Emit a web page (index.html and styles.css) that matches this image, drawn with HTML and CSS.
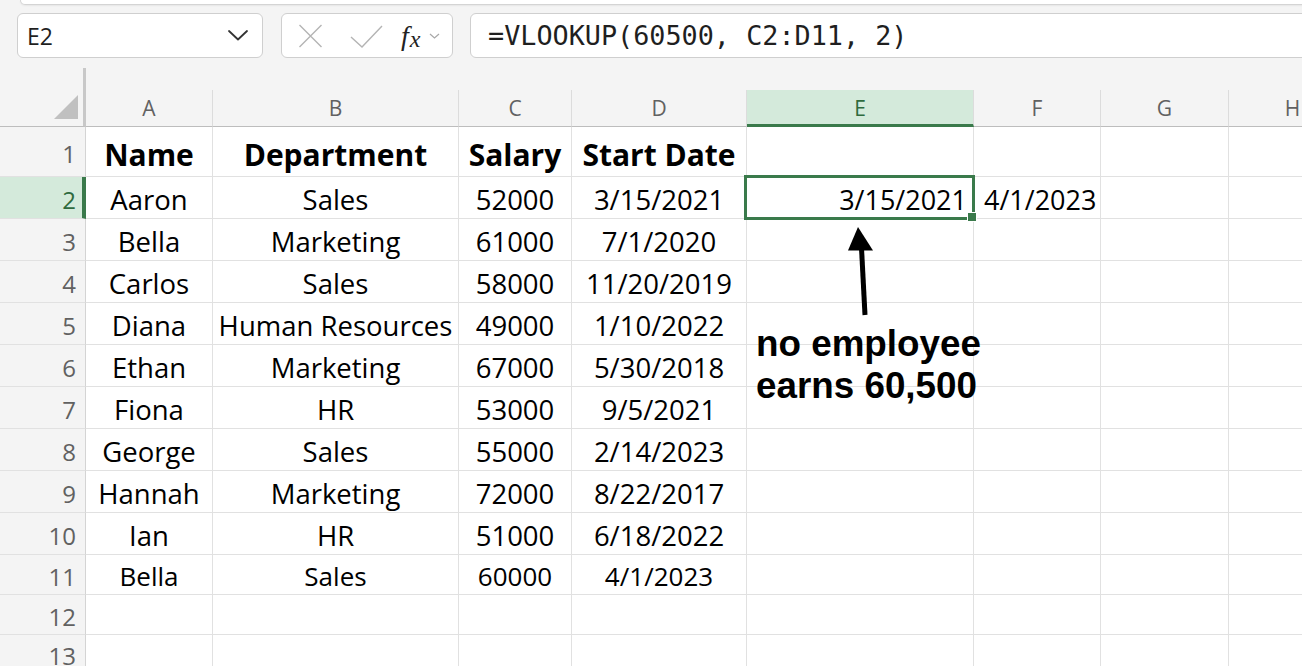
FILE: index.html
```html
<!DOCTYPE html>
<html>
<head>
<meta charset="utf-8">
<link rel="stylesheet" href="styles.css">
</head>
<body>
<div class="app">
  <div class="topstrip"></div>
  <div class="fbar">
    <div class="namebox">
      <span>E2</span>
      <svg width="20" height="11" viewBox="0 0 20 11"><path d="M1 1 L10 9.5 L19 1" fill="none" stroke="#333" stroke-width="1.8" stroke-linecap="round" stroke-linejoin="round"/></svg>
    </div>
    <div class="btns">
      <svg class="ic-x" width="25" height="24" viewBox="0 0 25 24"><path d="M1.5 1 L23.5 23 M23.5 1 L1.5 23" stroke="#b4b4b4" stroke-width="1.4" fill="none"/></svg>
      <svg class="ic-ok" width="33" height="23" viewBox="0 0 33 23"><path d="M1 12 L12 22 L32 1" stroke="#b4b4b4" stroke-width="1.4" fill="none"/></svg>
      <span class="fx"><i>f</i><i class="fxx">x</i></span>
      <svg class="ic-dd" width="11" height="6" viewBox="0 0 11 6"><path d="M1 1 L5.5 5 L10 1" stroke="#a8a8a8" stroke-width="1.2" fill="none"/></svg>
    </div>
    <div class="formula">=VLOOKUP(60500, C2:D11, 2)</div>
  </div>

  <div class="sheet">
    <div class="corner"><div class="tri"></div></div>
    <div class="spacer"></div>

    <div class="ch">A</div><div class="ch">B</div><div class="ch">C</div><div class="ch">D</div><div class="ch sel">E</div><div class="ch">F</div><div class="ch">G</div><div class="ch">H</div>

    <div class="rh">1</div><div class="c h">Name</div><div class="c h">Department</div><div class="c h">Salary</div><div class="c h">Start Date</div><div class="c"></div><div class="c"></div><div class="c"></div><div class="c"></div>

    <div class="rh sel">2</div><div class="c">Aaron</div><div class="c">Sales</div><div class="c">52000</div><div class="c">3/15/2021</div><div class="c r active">3/15/2021</div><div class="c l">4/1/2023</div><div class="c"></div><div class="c"></div>

    <div class="rh">3</div><div class="c">Bella</div><div class="c">Marketing</div><div class="c">61000</div><div class="c">7/1/2020</div><div class="c"></div><div class="c"></div><div class="c"></div><div class="c"></div>

    <div class="rh">4</div><div class="c">Carlos</div><div class="c">Sales</div><div class="c">58000</div><div class="c">11/20/2019</div><div class="c"></div><div class="c"></div><div class="c"></div><div class="c"></div>

    <div class="rh">5</div><div class="c">Diana</div><div class="c">Human Resources</div><div class="c">49000</div><div class="c">1/10/2022</div><div class="c"></div><div class="c"></div><div class="c"></div><div class="c"></div>

    <div class="rh">6</div><div class="c">Ethan</div><div class="c">Marketing</div><div class="c">67000</div><div class="c">5/30/2018</div><div class="c"></div><div class="c"></div><div class="c"></div><div class="c"></div>

    <div class="rh">7</div><div class="c">Fiona</div><div class="c">HR</div><div class="c">53000</div><div class="c">9/5/2021</div><div class="c"></div><div class="c"></div><div class="c"></div><div class="c"></div>

    <div class="rh">8</div><div class="c">George</div><div class="c">Sales</div><div class="c">55000</div><div class="c">2/14/2023</div><div class="c"></div><div class="c"></div><div class="c"></div><div class="c"></div>

    <div class="rh">9</div><div class="c">Hannah</div><div class="c">Marketing</div><div class="c">72000</div><div class="c">8/22/2017</div><div class="c"></div><div class="c"></div><div class="c"></div><div class="c"></div>

    <div class="rh">10</div><div class="c">Ian</div><div class="c">HR</div><div class="c">51000</div><div class="c">6/18/2022</div><div class="c"></div><div class="c"></div><div class="c"></div><div class="c"></div>

    <div class="rh">11</div><div class="c s11">Bella</div><div class="c s11">Sales</div><div class="c s11">60000</div><div class="c s11">4/1/2023</div><div class="c"></div><div class="c"></div><div class="c"></div><div class="c"></div>

    <div class="rh">12</div><div class="c"></div><div class="c"></div><div class="c"></div><div class="c"></div><div class="c"></div><div class="c"></div><div class="c"></div><div class="c"></div>

    <div class="rh last">13</div><div class="c"></div><div class="c"></div><div class="c"></div><div class="c"></div><div class="c"></div><div class="c"></div><div class="c"></div><div class="c"></div>
  </div>

  <svg class="arrow" width="40" height="100" viewBox="0 0 40 100">
    <path d="M18 7 L8 30.5 L33 30.5 Z" fill="#000"/>
    <path d="M21.5 28 L25 95" stroke="#000" stroke-width="5" fill="none"/>
  </svg>
  <div class="note">no employee<br>earns 60,500</div>
</div>
</body>
</html>
```
FILE: styles.css
```css
* { box-sizing: border-box; }

body {
  margin: 0;
  background: #f4f4f4;
  overflow: hidden;
  font-family: "Open Sans", "Noto Sans", sans-serif;
}

.app {
  position: relative;
  width: 1302px;
  height: 666px;
  overflow: hidden;
}

.topstrip {
  margin-left: 20px;
  margin-right: -10px;
  height: 5px;
  background: #fff;
  border: 1px solid #d4d4d4;
  border-top: 0;
  border-bottom-left-radius: 8px;
  box-shadow: 0 1px 2px rgba(0, 0, 0, 0.06);
}

.fbar {
  display: flex;
  margin-top: 8px;
  height: 45px;
  padding-left: 17px;
}

.namebox {
  width: 246px;
  background: #fff;
  border: 1px solid #cfcfcf;
  border-radius: 6px;
  display: flex;
  align-items: center;
  justify-content: space-between;
  padding: 0 14px 0 9px;
  font-size: 23px;
  color: #1f1f1f;
}

.btns {
  width: 172px;
  margin-left: 18px;
  background: #fff;
  border: 1px solid #cfcfcf;
  border-radius: 6px;
  display: flex;
  align-items: center;
  padding-left: 16px;
}

.ic-x { margin-top: 1px; }
.ic-ok { margin-left: 27px; margin-top: 1px; }

.fx {
  margin-left: 18px;
  font-family: "Liberation Serif", serif;
  color: #222;
  display: flex;
  align-items: baseline;
}
.fx i { font-style: italic; }
.fx i:first-child { font-size: 28px; }
.fxx { font-size: 24px; margin-left: 1px; position: relative; top: 2px; }

.ic-dd { margin-left: 9px; }

.formula {
  flex: 1;
  margin-left: 17px;
  margin-right: -12px;
  background: #fff;
  border: 1px solid #cfcfcf;
  border-radius: 6px;
  padding-left: 17px;
  display: flex;
  align-items: center;
  font-family: "DejaVu Sans Mono", monospace;
  font-size: 26.8px;
  color: #1f1f1f;
  white-space: nowrap;
}

.sheet {
  margin-top: 10px;
  display: grid;
  grid-template-columns: 86px 127px 246px 113px 175px 227px 127px 128px 128px;
  grid-template-rows: 22px 37px 50px repeat(9, 42px) 40px 40px 40px;
}

.corner {
  grid-row: span 2;
  border-right: 3px solid #c8c8c8;
  border-bottom: 1px solid #bdbdbd;
  display: flex;
  align-items: flex-end;
  justify-content: flex-end;
  padding: 0 5px 7px 0;
}

.tri {
  width: 24px;
  height: 24px;
  background: #c0c0c0;
  clip-path: polygon(100% 0, 100% 100%, 0 100%);
}

.spacer {
  grid-column: 2 / -1;
}

.ch {
  border-right: 1px solid #dcdcdc;
  border-bottom: 1px solid #bdbdbd;
  display: flex;
  align-items: center;
  justify-content: center;
  font-size: 21px;
  color: #616161;
}

.ch.sel {
  background: #d4eadb;
  border-bottom: 3px solid #3a7a4b;
  color: #2f6a3e;
  padding-top: 2px;
}

.rh {
  border-right: 1px solid #d4d4d4;
  border-bottom: 1px solid #e1e1e1;
  display: flex;
  align-items: center;
  justify-content: flex-end;
  padding: 3px 9px 0 0;
  font-size: 24px;
  color: #616161;
}

.rh.sel {
  background: #d4eadb;
  border-right: 4px solid #3a7a4b;
  padding-right: 6px;
  color: #2f6a3e;
}

.rh.last { align-items: flex-start; padding-top: 4px; }

.c {
  background: #fff;
  border-right: 1px solid #e1e1e1;
  border-bottom: 1px solid #e1e1e1;
  display: flex;
  align-items: center;
  justify-content: center;
  font-size: 27.5px;
  color: #000;
  white-space: nowrap;
  padding-top: 3px;
}

.c.h {
  font-weight: 700;
  font-size: 30px;
  padding-top: 6px;
}

.c.r {
  justify-content: flex-end;
  padding-right: 6px;
  font-size: 27px;
}

.c.l {
  justify-content: flex-start;
  padding-left: 10px;
  font-size: 27px;
}

.c.s11 { font-size: 26px; padding-top: 2px; }

.active {
  position: relative;
  z-index: 2;
}

.active::before {
  content: "";
  position: absolute;
  top: -2px;
  left: -3px;
  right: -2px;
  bottom: -2px;
  border: 3px solid #3a7a4b;
}

.active::after {
  content: "";
  position: absolute;
  right: -4px;
  bottom: -4px;
  width: 8px;
  height: 8px;
  background: #3a7a4b;
  border: 1px solid #fff;
}

.arrow {
  position: absolute;
  left: 840px;
  top: 220px;
}

.note {
  position: absolute;
  left: 756px;
  top: 323px;
  font-family: "Liberation Sans", Arial, sans-serif;
  font-weight: 700;
  font-size: 36.8px;
  line-height: 42px;
  color: #000;
}
```
